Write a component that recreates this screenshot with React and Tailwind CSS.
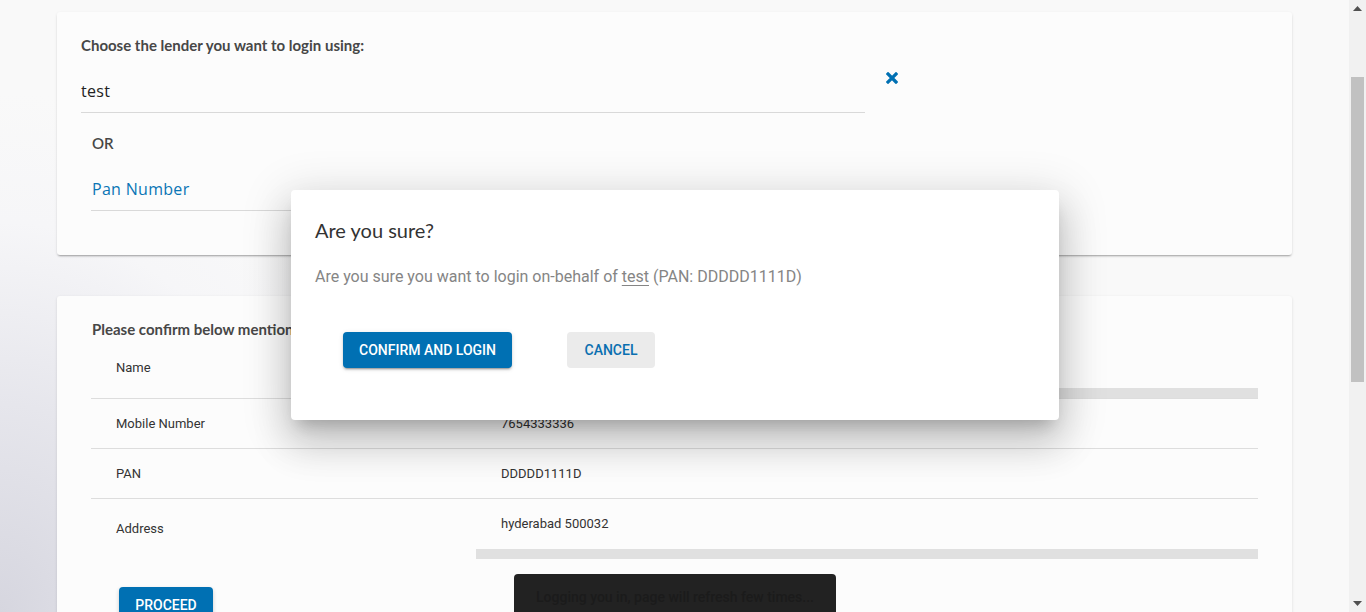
import React from "react";

const lato = "font-['Lato','Liberation_Sans',sans-serif]";
const roboto = "font-['Roboto','Liberation_Sans',sans-serif]";
const sans = "font-['Open_Sans','Liberation_Sans',sans-serif]";

function Row({ label, value }) {
  return (
    <div className="flex border-b border-[#dddddd] h-[50px]">
      <div className={`w-[385px] pl-[25px] flex items-center text-[13px] text-[#333] ${roboto}`}>{label}</div>
      <div className={`flex-1 pl-[25px] flex items-center text-[13px] text-[#333] ${roboto}`}>{value}</div>
    </div>
  );
}

function BarRow({ label, value, border }) {
  return (
    <div className={`flex ${border ? "h-[61px] border-b border-[#dddddd]" : "h-[60px]"}`}>
      <div className={`w-[385px] pl-[25px] flex items-center text-[13px] text-[#333] ${roboto}`}>{label}</div>
      <div className="flex-1 flex flex-col">
        <div className={`pl-[25px] pt-[15px] h-[35px] leading-[20px] text-[13px] text-[#333] ${roboto}`}>{value}</div>
        <div className="flex-1" />
        <div className="h-[10px] bg-[#e0e0e0]" />
      </div>
    </div>
  );
}

export default function App() {
  return (
    <div className="relative h-[612px] w-[1366px] overflow-hidden flex bg-[#f9f9f9]">
      <div className="relative flex-1 overflow-hidden bg-[radial-gradient(ellipse_420px_520px_at_0%_100%,#d6d6df_0%,#e6e6ec_40%,#f6f6f8_75%,#f9f9f9_100%)]">
        {/* card 1 */}
        <div className="mt-[12px] mx-[57px] h-[243px] bg-[#fcfcfc] rounded-[3px] shadow-[0_2px_2px_-1px_rgba(0,0,0,0.3),0_1px_3px_0_rgba(0,0,0,0.1)] pt-[24px] px-[24px]">
          <div className={`${lato} font-bold text-[15px] leading-[18px] text-[#474747]`}>
            Choose the lender you want to login using:
          </div>
          <div className="flex items-start mt-[16px]">
            <div className="w-[784px] h-[43px] border-b border-[#d9d9d9] flex items-center">
              <span className={`${sans} text-[16px] text-[#222] tracking-[0.3px]`}>test</span>
            </div>
            <div className="ml-[21px] mt-[2px]">
              <svg width="12" height="12" viewBox="0 0 12 12">
                <path d="M2 2 L10 10 M10 2 L2 10" stroke="#0070b3" strokeWidth="3.2" strokeLinecap="square" />
              </svg>
            </div>
          </div>
          <div className={`${lato} font-semibold text-[15px] text-[#474747] pl-[11px] mt-[20px] leading-[20px]`}>OR</div>
          <div className="ml-[10px] w-[774px] h-[46px] border-b border-[#d9d9d9] flex items-center pt-[2px] pl-[1px] mt-[12px]">
            <span className={`${sans} text-[16px] text-[#0a75b5] tracking-[0.3px]`}>Pan Number</span>
          </div>
        </div>

        {/* card 2 */}
        <div className="mt-[41px] mx-[57px] h-[340px] bg-[#fcfcfc] rounded-[3px] shadow-[0_1px_3px_0_rgba(0,0,0,0.12)] pt-[24px] pl-[34px] pr-[34px]">
          <div className={`${lato} font-bold text-[15px] leading-[18px] text-[#474747] pl-[1px]`}>
            Please confirm below mentioned details before proceeding
          </div>
          <div>
            <BarRow label="Name" value="" border />
            <Row label="Mobile Number" value="7654333336" />
            <Row label="PAN" value="DDDDD1111D" />
            <BarRow label="Address" value="hyderabad 500032" />
          </div>
          <div className="mt-[28px] ml-[28px]">
            <button className={`w-[94px] h-[36px] rounded-[4px] bg-[#0070b3] text-white text-[14px] font-medium uppercase ${roboto} shadow-[0_2px_4px_rgba(0,0,0,0.2)]`}>
              Proceed
            </button>
          </div>
        </div>

        {/* toast */}
        <div className="absolute left-[514px] top-[574px] w-[322px] h-[48px] bg-[#222222] rounded-[4px] flex items-start justify-center pt-[12px]">
          <span className={`${roboto} text-[14px] leading-[22px] text-[#1b1b1b] font-medium`}>
            Logging you in, page will refresh few times...
          </span>
        </div>

        {/* modal */}
        <div className="absolute left-[291px] top-[190px] w-[768px] h-[230px] bg-white rounded-[4px] shadow-[0_11px_15px_-7px_rgba(0,0,0,0.2),0_24px_38px_3px_rgba(0,0,0,0.14),0_9px_46px_8px_rgba(0,0,0,0.12)] px-[24px] pt-[24px]">
          <div className={`${lato} text-[20px] leading-[32px] text-[#333]`}>Are you sure?</div>
          <div className={`${roboto} mt-[19px] text-[16px] leading-[24px] text-[#858585]`}>
            Are you sure you want to login on-behalf of <span className="underline underline-offset-[3px]">test</span> (PAN: DDDDD1111D)
          </div>
          <div className="flex mt-[43px] pl-[28px]">
            <button className={`w-[169px] h-[36px] rounded-[4px] bg-[#0070b3] text-white text-[14px] font-medium uppercase ${roboto} shadow-[0_3px_1px_-2px_rgba(0,0,0,0.2),0_2px_2px_0_rgba(0,0,0,0.14),0_1px_5px_0_rgba(0,0,0,0.12)]`}>
              Confirm and Login
            </button>
            <button className={`ml-[55px] w-[88px] h-[36px] rounded-[4px] bg-[#ebebeb] text-[#0a6fb0] text-[14px] font-medium uppercase ${roboto}`}>
              Cancel
            </button>
          </div>
        </div>
      </div>

      {/* scrollbar */}
      <div className="w-[17px] h-full bg-[#f1f1f1] flex flex-col items-center">
        <div className="h-[17px] w-full flex items-center justify-center">
          <svg width="9" height="5" viewBox="0 0 9 5"><path d="M0 5 L4.5 0 L9 5 Z" fill="#505050" /></svg>
        </div>
        <div className="mt-[60px] w-[13px] h-[305px] bg-[#c1c1c1]" />
        <div className="flex-1" />
        <div className="h-[17px] w-full flex items-center justify-center">
          <svg width="9" height="5" viewBox="0 0 9 5"><path d="M0 0 L4.5 5 L9 0 Z" fill="#505050" /></svg>
        </div>
      </div>
    </div>
  );
}
